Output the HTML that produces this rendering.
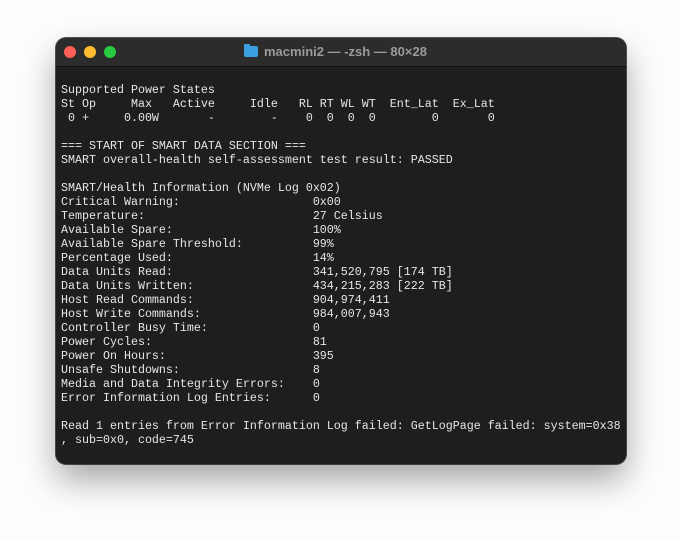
<!DOCTYPE html>
<html><head><meta charset="utf-8"><style>
html,body{margin:0;padding:0;width:682px;height:539px;background:#fdfdfd;overflow:hidden}
.win{position:absolute;left:56px;top:38px;width:570px;height:426px;background:#1e1e1e;border-radius:10px;box-shadow:0 16px 34px rgba(0,0,0,0.35),0 0 0 1px #555;overflow:hidden}
.tb{height:28px;background:#2c2c2c;border-bottom:1px solid #111;position:relative}
.dot{position:absolute;top:8px;width:12px;height:12px;border-radius:50%}
.title{position:absolute;left:188px;top:6px;font:bold 13px "Liberation Sans",sans-serif;color:#9a9a9a;white-space:nowrap}
.fold{display:inline-block;width:14px;height:11px;background:#3aa0e0;border-radius:2px;vertical-align:-1px;margin-right:6px;position:relative}
.fold:before{content:"";position:absolute;left:0;top:-2px;width:6px;height:3px;background:#3aa0e0;border-radius:1px 1px 0 0}
pre{margin:0;position:absolute;left:5px;top:31px;font:11.67px/14px "Liberation Mono",monospace;color:#e6e6e6}
</style></head><body>
<div class="win">
<div class="tb">
<div class="dot" style="left:8px;background:#fe5f57"></div>
<div class="dot" style="left:28px;background:#febc2e"></div>
<div class="dot" style="left:48px;background:#28c840"></div>
<div class="title"><span class="fold"></span>macmini2 — -zsh — 80×28</div>
</div>
<pre>

Supported Power States
St Op     Max   Active     Idle   RL RT WL WT  Ent_Lat  Ex_Lat
 0 +     0.00W       -        -    0  0  0  0        0       0

=== START OF SMART DATA SECTION ===
SMART overall-health self-assessment test result: PASSED

SMART/Health Information (NVMe Log 0x02)
Critical Warning:                   0x00
Temperature:                        27 Celsius
Available Spare:                    100%
Available Spare Threshold:          99%
Percentage Used:                    14%
Data Units Read:                    341,520,795 [174 TB]
Data Units Written:                 434,215,283 [222 TB]
Host Read Commands:                 904,974,411
Host Write Commands:                984,007,943
Controller Busy Time:               0
Power Cycles:                       81
Power On Hours:                     395
Unsafe Shutdowns:                   8
Media and Data Integrity Errors:    0
Error Information Log Entries:      0

Read 1 entries from Error Information Log failed: GetLogPage failed: system=0x38
, sub=0x0, code=745
</pre>
</div>
</body></html>
